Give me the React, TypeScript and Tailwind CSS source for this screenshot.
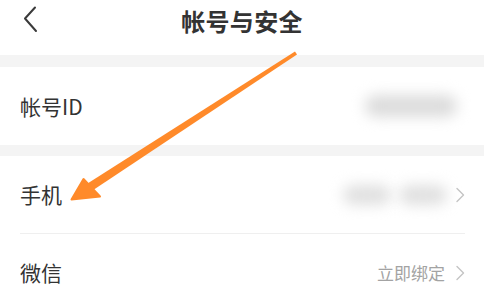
import React from "react";

const font = { fontFamily: '"Noto Sans CJK SC", "Noto Sans", sans-serif' };

function Chevron() {
  return (
    <svg width="10" height="16" viewBox="0 0 10 16" className="shrink-0">
      <path d="M2 1.5 L8.5 8 L2 14.5" fill="none" stroke="#c4c4c4" strokeWidth="1.4" strokeLinecap="round" strokeLinejoin="round" />
    </svg>
  );
}

export default function App() {
  return (
    <div className="relative w-[484px] h-[295px] overflow-hidden bg-white text-[#333]" style={font}>
      {/* Header */}
      <div className="relative flex items-center justify-center h-[55px]">
        <svg className="absolute left-[20px] top-[5px]" width="22" height="30" viewBox="0 0 22 30">
          <path d="M15 2.5 L5 13.5 L16 26" fill="none" stroke="#3a3a3a" strokeWidth="2" strokeLinecap="round" strokeLinejoin="round" />
        </svg>
        <div className="text-[24px] font-bold leading-none tracking-[0.3px] -mt-[14px] text-[#333]">帐号与安全</div>
      </div>
      <div className="h-[12px] bg-[#f4f4f4]" />
      {/* ID row */}
      <div className="flex items-center justify-between h-[78px] pl-[20px] pr-[27px]">
        <div className="text-[21px] leading-none">帐号ID</div>
        <div className="w-[92px] h-[22px] rounded-full bg-[#dcdcdc] blur-[7px]" />
      </div>
      <div className="h-[11px] bg-[#f4f4f4]" />
      {/* Phone row */}
      <div className="flex items-center justify-between h-[77px] pl-[20px] pr-[19px]">
        <div className="text-[21px] leading-none">手机</div>
        <div className="flex items-center gap-[6px]">
          <div className="flex items-center gap-[8px] mr-[2px]">
            <div className="w-[48px] h-[20px] rounded-full bg-[#e0e0e0] blur-[7px]" />
            <div className="w-[48px] h-[20px] rounded-full bg-[#e0e0e0] blur-[7px]" />
          </div>
          <Chevron />
        </div>
      </div>
      <div className="ml-[20px] mr-[19px] h-px bg-[#efefef]" />
      {/* WeChat row */}
      <div className="flex items-center justify-between h-[77px] pl-[20px] pr-[19px]">
        <div className="text-[21px] leading-none">微信</div>
        <div className="flex items-center gap-[10px]">
          <div className="text-[17px] leading-none text-[#a3a3a3]">立即绑定</div>
          <Chevron />
        </div>
      </div>
      {/* Annotation arrow */}
      <svg className="absolute left-0 top-0 pointer-events-none" width="484" height="295" viewBox="0 0 484 295">
        <polygon points="297,54.4 295,51.6 87.5,183.5 92.5,190.5" fill="#ff8a2a" />
        <polygon points="71.5,199.5 83.5,179 100,196.5" fill="#ff8a2a" stroke="#ff8a2a" strokeWidth="2" strokeLinejoin="round" />
      </svg>
    </div>
  );
}
